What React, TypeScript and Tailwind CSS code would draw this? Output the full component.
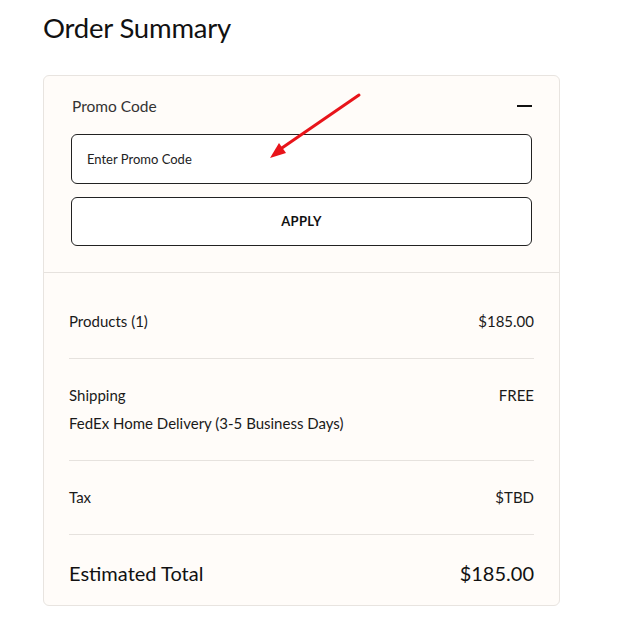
import React from 'react';

const font = { fontFamily: 'Lato, "Open Sans", sans-serif' };

const SummaryRow: React.FC<{ label: string; value: string; note?: string; first?: boolean }> = ({ label, value, note, first }) => (
  <div className={`flex justify-between border-[#e6e2de] ${first ? 'pt-[36px]' : 'pt-[24px]'} pb-[25px] border-b`}>
    <div className="flex flex-col gap-[4px]">
      <span className="text-[15px] leading-6 text-[#1a1a1a]">{label}</span>
      {note && <span className="text-[15px] leading-6 text-[#1a1a1a]">{note}</span>}
    </div>
    <span className="text-[15px] leading-6 text-[#1a1a1a]">{value}</span>
  </div>
);

export default function App() {
  return (
    <div className="min-h-screen bg-white pl-[43px] pt-[10px]" style={font}>
      <h1 className="text-[27.5px] leading-9 text-[#111] tracking-[-0.2px]">Order Summary</h1>

      <div className="relative mt-[29px] w-[517px] rounded-[6px] border border-[#e8e4e0] bg-[#fffcf9]">
        {/* Promo code block */}
        <div className="px-[27px] pt-[18px] pb-[26px] border-b border-[#e6e2de]">
          <div className="flex items-center justify-between pl-[1px]">
            <span className="text-[15.5px] leading-6 text-[#333]">Promo Code</span>
            <span className="block h-[2.5px] w-[15px] bg-[#111]" />
          </div>
          <input
            placeholder="Enter Promo Code"
            className="mt-[16px] block h-[50px] w-full rounded-[6px] border border-[#222] bg-white px-[15px] text-[13px] text-[#111] placeholder:text-[#222] outline-none"
          />
          <button className="mt-[13px] block h-[49px] w-full rounded-[6px] border border-[#222] bg-white text-[13px] font-bold tracking-[0.3px] text-[#111]">
            APPLY
          </button>
        </div>

        {/* Totals */}
        <div className="px-[25px]">
          <SummaryRow first label="Products (1)" value="$185.00" />
          <SummaryRow label="Shipping" note="FedEx Home Delivery (3-5 Business Days)" value="FREE" />
          <SummaryRow label="Tax" value="$TBD" />
          <div className="flex justify-between pt-[23px] pb-[17px]">
            <span className="text-[20px] leading-[30px] text-[#111]">Estimated Total</span>
            <span className="text-[20px] leading-[30px] text-[#111]">$185.00</span>
          </div>
        </div>

        {/* annotation arrow */}
        <svg className="pointer-events-none absolute left-[215px] top-[10px]" width="110" height="90" viewBox="0 0 110 90">
          <line x1="100" y1="9" x2="20" y2="64" stroke="#e8141a" strokeWidth="3" strokeLinecap="round" />
          <polygon points="11,72 20,57 27,67" fill="#e8141a" />
        </svg>
      </div>
    </div>
  );
}
